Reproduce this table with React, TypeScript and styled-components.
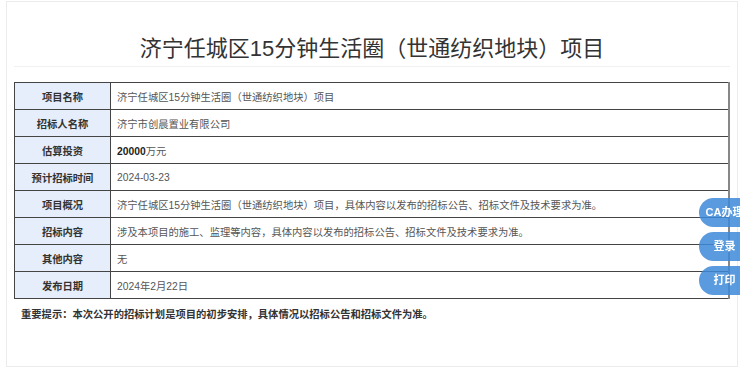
import styled, { createGlobalStyle } from 'styled-components';

const GlobalStyle = createGlobalStyle`
    body {
        margin: 0;
        background: #fff;
        font-family: 'Liberation Sans', 'Noto Sans CJK SC', sans-serif;
    }
`;

const Card = styled.div`
    margin: 1px 2px 0 6px;
    height: 366px;
    border: 1px solid #ececec;
    box-sizing: border-box;
`;

const Title = styled.h1`
    margin: 0;
    padding-top: 31px;
    height: 33px;
    line-height: 32px;
    text-align: center;
    font-size: 22px;
    font-weight: 400;
    color: #333;
`;

const Divider = styled.div`
    margin: 0 7px;
    border-top: 1px solid #f0f0f0;
`;

const Table = styled.table`
    margin: 15px 7px 0;
    width: calc(100% - 14px);
    border-collapse: collapse;
    border: 1px solid #444;
    border-right: 2px solid #888;
    font-size: 10.3px;
`;

const Row = styled.tr`
    height: 27px;
`;

const Label = styled.td`
    width: 95px;
    background: #e5eefa;
    border: 1px solid #444;
    text-align: center;
    font-weight: 700;
    color: #333;
    padding: 0;
`;

const Value = styled.td`
    border: 1px solid #444;
    padding: 0 0 0 6px;
    color: #555;
    b {
        color: #222;
    }
`;

const Note = styled.p`
    margin: 8px 0 0;
    padding-left: 14px;
    font-size: 10.3px;
    line-height: 15px;
    font-weight: 700;
    color: #333;
`;

const SideMenu = styled.div`
    position: fixed;
    right: -10px;
    top: 198px;
    display: flex;
    flex-direction: column;
    gap: 5px;
`;

const SideButton = styled.div`
    width: 51px;
    height: 29px;
    line-height: 29px;
    border-radius: 15px 0 0 15px;
    background: rgba(60, 138, 216, 0.85);
    color: #fff;
    font-size: 11px;
    font-weight: 700;
    text-align: center;
    white-space: nowrap;
    overflow: hidden;
`;

const rows: { label: string; value: React.ReactNode }[] = [
    { label: '项目名称', value: '济宁任城区15分钟生活圈（世通纺织地块）项目' },
    { label: '招标人名称', value: '济宁市创晨置业有限公司' },
    { label: '估算投资', value: <><b>20000</b>万元</> },
    { label: '预计招标时间', value: '2024-03-23' },
    {
        label: '项目概况',
        value: '济宁任城区15分钟生活圈（世通纺织地块）项目，具体内容以发布的招标公告、招标文件及技术要求为准。',
    },
    {
        label: '招标内容',
        value: '涉及本项目的施工、监理等内容，具体内容以发布的招标公告、招标文件及技术要求为准。',
    },
    { label: '其他内容', value: '无' },
    { label: '发布日期', value: '2024年2月22日' },
];

const App = () => {
    return (
        <>
            <GlobalStyle />
            <Card>
                <Title>济宁任城区15分钟生活圈（世通纺织地块）项目</Title>
                <Divider />
                <Table>
                    <tbody>
                        {rows.map((row) => (
                            <Row key={row.label}>
                                <Label>{row.label}</Label>
                                <Value>{row.value}</Value>
                            </Row>
                        ))}
                    </tbody>
                </Table>
                <Note>重要提示：本次公开的招标计划是项目的初步安排，具体情况以招标公告和招标文件为准。</Note>
            </Card>
            <SideMenu>
                <SideButton>CA办理</SideButton>
                <SideButton>登录</SideButton>
                <SideButton>打印</SideButton>
            </SideMenu>
        </>
    );
};

export default App;
